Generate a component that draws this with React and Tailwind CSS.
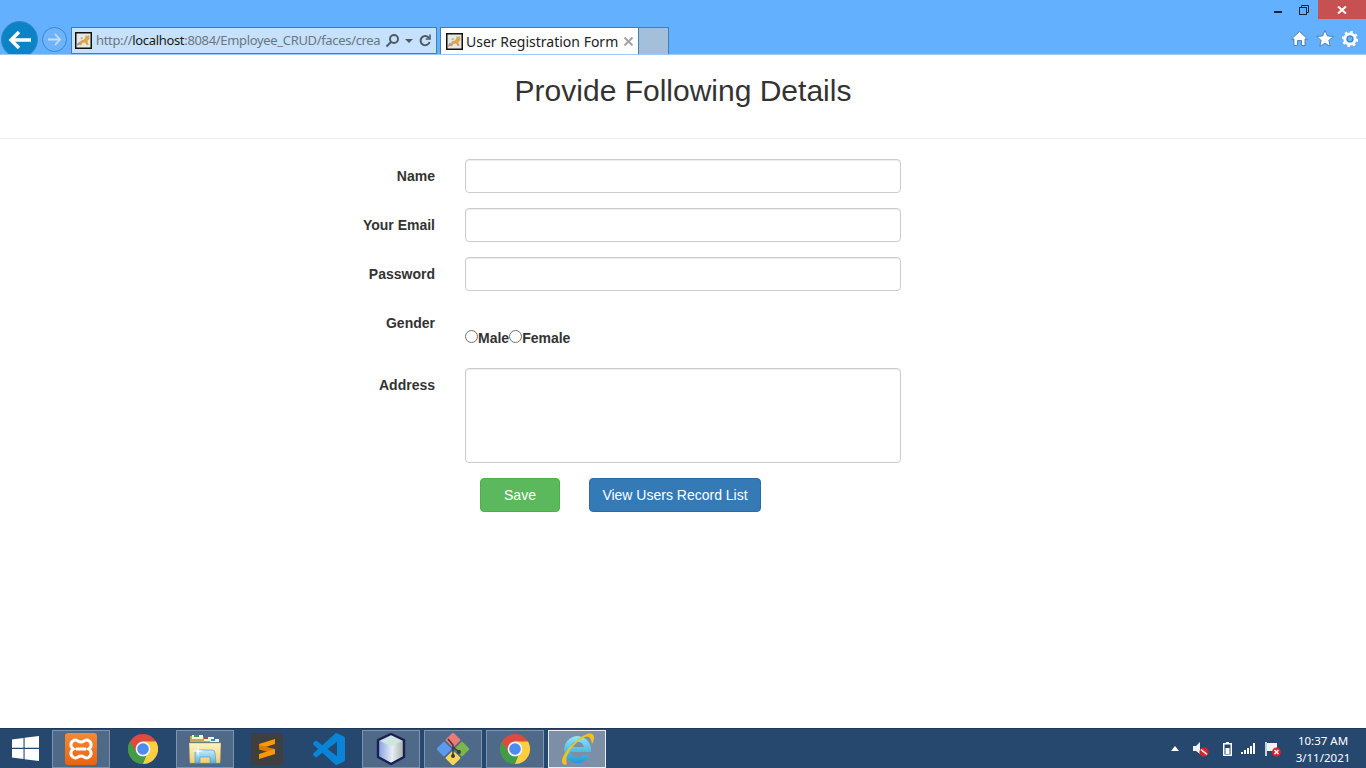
const SEGOE = 'font-["Noto_Sans",sans-serif]'

// favicon tomcat, petit carre noir
function Favicon() {
  return (
    <svg width="17" height="17" viewBox="0 0 17 17" className="shrink-0">
      <rect x="0.75" y="0.75" width="15.5" height="15.5" fill="#e6e8e4" stroke="#111" strokeWidth="1.5" />
      <path d="M3 12 L6 8.5 L9 7.5 L10.5 5 L10.5 3 L12 4 L14 3 L14.5 7 L12.5 9 L13.5 13 L11.5 13 L10 10.5 L7.5 11 L6 13.5 Z" fill="#d9a84e" />
      <path d="M2 14 L6 11.5 L4 10 L2.5 11.5 Z" fill="#9c9a8e" />
      <path d="M5 6 L8 5 L7 7.5 Z" fill="#a8a69a" />
    </svg>
  )
}

function Chrome({ size = 30 }) {
  return (
    <svg width={size} height={size} viewBox="0 0 30 30">
      <circle cx="15" cy="15" r="15" fill="#dd4b3e" />
      <path d="M2 7.5 A15 15 0 0 0 15 30 L21.5 18.8 L15 21 L8.5 18.8 Z" fill="#3f9d47" />
      <path d="M15 30 A15 15 0 0 0 28 7.5 L15 7.5 L21 15 Z" fill="#fccf41" />
      <circle cx="15" cy="15" r="7.4" fill="#f4f4f4" />
      <circle cx="15" cy="15" r="5.8" fill="#4c8bf0" />
    </svg>
  )
}

function Xampp() {
  return (
    <svg width="32" height="32" viewBox="0 0 32 32">
      <defs>
        <linearGradient id="xamppBg" x1="0" x2="0" y1="0" y2="1">
          <stop offset="0" stopColor="#f58a35" />
          <stop offset="1" stopColor="#e8640f" />
        </linearGradient>
      </defs>
      <rect x="0" y="0" width="32" height="32" rx="3" fill="url(#xamppBg)" />
      <g fill="none" stroke="#fff" strokeWidth="3">
        <path d="M13 8 Q10 6 8 8 A4.6 4.6 0 0 0 8.5 16 A4.6 4.6 0 0 0 8 24 Q10 26 13 24 Q16 22 19 24 Q22 26 24 24 A4.6 4.6 0 0 0 23.5 16 A4.6 4.6 0 0 0 24 8 Q22 6 19 8 Q16 10 13 8 Z" />
        <path d="M11 16 H21" />
      </g>
    </svg>
  )
}

function Sublime() {
  return (
    <div className="w-8 h-8 bg-[#3f3f3f] rounded-[2px] flex items-center justify-center">
      <svg width="18" height="22" viewBox="0 0 18 22">
        <path d="M17 1 L1 6 L1 11 L17 6 Z" fill="#ff9800" />
        <path d="M1 7 L17 11 L17 16 L1 11.5 Z" fill="#d97c06" />
        <path d="M17 11 L1 16 L1 21 L17 16 Z" fill="#ff9800" />
      </svg>
    </div>
  )
}

function VsCode() {
  return (
    <svg width="32" height="32" viewBox="0 0 24 24">
      <path
        d="M23.15 2.587L18.21.21a1.494 1.494 0 0 0-1.705.29l-9.46 8.63-4.12-3.128a.999.999 0 0 0-1.276.057L.327 7.261A1 1 0 0 0 .326 8.74L3.899 12 .326 15.26a1 1 0 0 0 .001 1.479L1.65 17.94a.999.999 0 0 0 1.276.057l4.12-3.128 9.46 8.63a1.492 1.492 0 0 0 1.704.29l4.942-2.377A1.5 1.5 0 0 0 24 20.06V3.939a1.5 1.5 0 0 0-.85-1.352zm-5.146 14.861L10.826 12l7.178-5.448v10.896z"
        fill="#0a84d6"
      />
    </svg>
  )
}

function Explorer() {
  return (
    <svg width="32" height="32" viewBox="0 0 32 32">
      <defs>
        <linearGradient id="folderFront" x1="0" x2="0" y1="0" y2="1">
          <stop offset="0" stopColor="#fdf3c4" />
          <stop offset="1" stopColor="#f0cf74" />
        </linearGradient>
        <linearGradient id="folderStand" x1="0" x2="0" y1="0" y2="1">
          <stop offset="0" stopColor="#c4ecf8" />
          <stop offset="1" stopColor="#62b3dc" />
        </linearGradient>
      </defs>
      <path d="M1 3 H14 L15 6 H27 L28 9 H1 Z" fill="#c9a850" />
      <rect x="3" y="2" width="11" height="4" fill="#f7f3e0" />
      <rect x="5" y="2" width="5" height="2" fill="#35a24a" />
      <rect x="15" y="4" width="10" height="4" fill="#f7f3e0" />
      <rect x="15" y="4" width="4" height="2" fill="#c8413a" />
      <rect x="21" y="6" width="9" height="3" fill="#f7f3e0" />
      <rect x="22" y="6" width="4" height="2" fill="#2f8fd8" />
      <path d="M0 10 H32 L31 30 H1 Z" fill="url(#folderFront)" stroke="#c9a850" strokeWidth="0.6" />
      <path d="M6 30 L6 20 Q6 17 9 17 L23 17 Q26 17 26 20 L27 30 L21 30 L21 24 L11 24 L11 30 Z" fill="url(#folderStand)" stroke="#4a96bf" strokeWidth="0.6" />
      <path d="M9 12 L10 17 L15 18 L10 19 L9 24 L8 19 L3 18 L8 17 Z" fill="#ffffff" opacity="0.85" />
    </svg>
  )
}

function Cube() {
  return (
    <svg width="30" height="32" viewBox="0 0 30 32">
      <defs>
        <linearGradient id="cubeFace" x1="0" x2="1" y1="0" y2="0">
          <stop offset="0" stopColor="#7f9fe0" />
          <stop offset="0.55" stopColor="#e8eef4" />
          <stop offset="1" stopColor="#9fb0a8" />
        </linearGradient>
      </defs>
      <path d="M15 1 L28 7 L28 24 L15 31 L2 24 L2 7 Z" fill="url(#cubeFace)" stroke="#1d1f52" strokeWidth="2.4" strokeLinejoin="round" />
      <path d="M15 3 L26 8 L15 13 L4 8 Z" fill="#cfe6df" />
    </svg>
  )
}

function GitGui() {
  return (
    <svg width="32" height="32" viewBox="0 0 32 32">
      <rect x="10.5" y="1.5" width="11" height="11" rx="1" transform="rotate(45 16 7)" fill="#ee7a75" />
      <rect x="1.5" y="10.5" width="11" height="11" rx="1" transform="rotate(45 7 16)" fill="#5b9bef" />
      <rect x="19.5" y="10.5" width="11" height="11" rx="1" transform="rotate(45 25 16)" fill="#7ab648" />
      <rect x="10.5" y="19.5" width="11" height="11" rx="1" transform="rotate(45 16 25)" fill="#f6d659" />
      <path d="M11 6 L16 12 L16 24 M16 14 L22 19" stroke="#3c3c46" strokeWidth="1.6" fill="none" />
      <circle cx="16" cy="23" r="2" fill="#3c3c46" />
      <circle cx="22" cy="19" r="2" fill="#3c3c46" />
    </svg>
  )
}

function IE() {
  return (
    <svg width="36" height="34" viewBox="0 0 36 34">
      <defs>
        <linearGradient id="ieBlue" x1="0" x2="0" y1="0" y2="1">
          <stop offset="0" stopColor="#8fe6f7" />
          <stop offset="1" stopColor="#1f9ad8" />
        </linearGradient>
      </defs>
      <path
        d="M18.5 4 A13.5 13.5 0 1 0 31 23 L23 23 A6.5 6.5 0 0 1 11.5 20 L32 20 A14 14 0 0 0 18.5 4 Z M11.5 15 A7 7 0 0 1 25 15 Z"
        fill="url(#ieBlue)"
        fillRule="evenodd"
      />
      <path d="M4 32 C-1 27 14 8 28 2 C35 0 37 5 33 12 C32 6 30 3 26 5 C16 10 4 24 8 32 C7 33 5 33 4 32 Z" fill="#f2c21f" />
    </svg>
  )
}

const TASK_ITEMS = [
  { icon: <Xampp />, framed: true },
  { icon: <Chrome /> },
  { icon: <Explorer />, framed: true },
  { icon: <Sublime /> },
  { icon: <VsCode /> },
  { icon: <Cube />, framed: true },
  { icon: <GitGui />, framed: true },
  { icon: <Chrome />, framed: true },
  { icon: <IE />, active: true },
]

function TaskButton({ item }) {
  let cls = 'border border-transparent'
  if (item.framed) cls = 'border border-[#7f94aa] bg-[#4f6a88]'
  if (item.active) cls = 'border border-[#e8edf2] bg-[#7c8fa6]'
  return (
    <div className={`w-[58px] h-[38px] flex items-center justify-center overflow-hidden ${cls}`}>
      {item.icon}
    </div>
  )
}

function TitleBar() {
  return (
    <div className="h-[55px] shrink-0 bg-[#63b0ff] border-b border-[#9cc9f5] flex flex-col overflow-hidden">
      <div className="h-[27px] flex justify-end items-start gap-[2px] shrink-0">
        <div className="w-[24px] h-[19px] flex items-center justify-center">
          <div className="w-[8px] h-[2px] bg-[#10243a] mt-[4px]" />
        </div>
        <div className="w-[24px] h-[19px] flex items-center justify-center">
          <svg width="10" height="10" viewBox="0 0 10 10" fill="none" stroke="#10243a">
            <rect x="0.5" y="2.5" width="7" height="7" />
            <path d="M2.5 2.5 V0.5 H9.5 V7.5 H7.5" />
          </svg>
        </div>
        <div className="w-[48px] h-[19px] bg-[#c75050] flex items-center justify-center">
          <svg width="10" height="8" viewBox="0 0 10 8" stroke="#fff" strokeWidth="2">
            <path d="M1 0.5 L9 7.5 M9 0.5 L1 7.5" />
          </svg>
        </div>
      </div>

      <div className="flex-1 flex items-end min-h-0">
        {/* retour / suivant */}
        <div className="w-[37px] h-[27px] ml-[1px] relative shrink-0">
          <div className="absolute left-0 top-[-6px] w-[37px] h-[37px] rounded-full bg-[#0a84c6] border border-[#3a86c0] flex items-center justify-center">
            <svg width="24" height="20" viewBox="0 0 24 20" fill="none" stroke="#fff" strokeWidth="3.4">
              <path d="M11 2 L3 10 L11 18 M3 10 H23" />
            </svg>
          </div>
        </div>
        <div className="ml-[4px] mb-[2px] w-[25px] h-[25px] rounded-full border border-[#3f86c4] bg-[#6db4fc] flex items-center justify-center shrink-0">
          <svg width="15" height="13" viewBox="0 0 15 13" fill="none" stroke="#c6def7" strokeWidth="1.8">
            <path d="M8 1 L13 6.5 L8 12 M13 6.5 H1" />
          </svg>
        </div>

        {/* barre d'adresse */}
        <div className="ml-[4px] w-[366px] h-[27px] bg-[#c5e1fc] border border-[#3d7fb8] flex items-center pl-[3px] shrink-0">
          <Favicon />
          <div className={`ml-[4px] w-[286px] mb-[1px] whitespace-nowrap text-[13px] tracking-[-0.33px] leading-[18px] text-[#6d7680] ${SEGOE}`}>
            http://<span className="text-[#1a1a1a]">localhost</span>:8084/Employee_CRUD/faces/crea
          </div>
          <svg width="15" height="15" viewBox="0 0 15 15" fill="none" stroke="#4d5a66" strokeWidth="2" className="ml-[3px] shrink-0">
            <circle cx="9" cy="6" r="4" />
            <path d="M6 9 L1.5 13.5" />
          </svg>
          <svg width="8" height="4" viewBox="0 0 8 4" className="ml-[5px] shrink-0">
            <path d="M0 0 H8 L4 4 Z" fill="#4d5a66" />
          </svg>
          <svg width="12" height="13" viewBox="0 0 12 13" fill="none" stroke="#4d5a66" strokeWidth="2" className="ml-[6px] shrink-0">
            <path d="M10 4 A4.6 4.6 0 1 0 10.6 8" />
            <path d="M11 0.5 V5 H6.8" strokeWidth="1.6" />
          </svg>
        </div>

        {/* onglets */}
        <div className="ml-[3px] w-[199px] h-[27px] bg-white border border-b-0 border-[#3d7fb8] flex items-center pl-[5px] shrink-0">
          <Favicon />
          <span className={`ml-[3px] mt-[2px] text-[14px] leading-[18px] text-[#222] whitespace-nowrap ${SEGOE}`}>User Registration Form</span>
          <svg width="9" height="9" viewBox="0 0 9 9" stroke="#a3a3a3" strokeWidth="2" className="ml-[6px] shrink-0">
            <path d="M0.5 0.5 L8.5 8.5 M8.5 0.5 L0.5 8.5" />
          </svg>
        </div>
        <div className="w-[30px] h-[27px] bg-[#a3bfd9] border border-l-0 border-b-0 border-[#3d7fb8] shrink-0" />

        {/* accueil, favoris, outils */}
        <div className="ml-auto mr-[8px] mb-[7px] flex items-center gap-[8px]">
          <svg width="17" height="17" viewBox="0 0 17 16">
            <path d="M8.5 1 L16.5 8.5 L14 8.5 L14 15 L10.5 15 L10.5 10 L6.5 10 L6.5 15 L3 15 L3 8.5 L0.5 8.5 Z" fill="#fff" stroke="#3f6f9f" strokeWidth="0.8" />
          </svg>
          <svg width="18" height="17" viewBox="0 0 18 17">
            <path d="M9 0.5 L11.4 6 L17.4 6.5 L12.8 10.4 L14.2 16.3 L9 13.2 L3.8 16.3 L5.2 10.4 L0.6 6.5 L6.6 6 Z" fill="#fff" stroke="#3f6f9f" strokeWidth="0.8" />
          </svg>
          <svg width="16" height="16" viewBox="0 0 16 16">
            <circle cx="8" cy="8" r="5.2" fill="none" stroke="#fff" strokeWidth="2.8" />
            <circle cx="8" cy="8" r="7" fill="none" stroke="#fff" strokeWidth="2.4" strokeDasharray="2.5 3" />
            <circle cx="8" cy="8" r="2.9" fill="none" stroke="#3f6f9f" strokeWidth="0.8" />
          </svg>
        </div>
      </div>
    </div>
  )
}

function Tray() {
  return (
    <div className="ml-auto flex items-center h-full">
      <svg width="8" height="5" viewBox="0 0 8 5" className="mr-[13px]">
        <path d="M0 5 L4 0 L8 5 Z" fill="#fff" />
      </svg>
      <svg width="17" height="16" viewBox="0 0 17 16" className="mr-[14px]">
        <path d="M1 5 H4 L8 1 V13 L4 10 H1 Z" fill="#eef2f6" />
        <circle cx="12" cy="11" r="4.6" fill="#d9232e" />
        <path d="M9 8.5 L15 13.5" stroke="#fff" strokeWidth="1.6" />
      </svg>
      <svg width="9" height="14" viewBox="0 0 9 14" className="mr-[9px]">
        <rect x="0.75" y="1.75" width="7.5" height="11.5" fill="none" stroke="#fff" strokeWidth="1.5" />
        <rect x="3" y="0" width="3" height="1.5" fill="#fff" />
        <rect x="2.5" y="6" width="4" height="6" fill="#fff" />
      </svg>
      <svg width="15" height="11" viewBox="0 0 15 11" className="mr-[9px]">
        <rect x="0" y="9" width="2" height="2" fill="#fff" />
        <rect x="3" y="7" width="2" height="4" fill="#fff" />
        <rect x="6" y="5" width="2" height="6" fill="#fff" />
        <rect x="9" y="3" width="2" height="8" fill="#fff" />
        <rect x="12" y="0" width="2" height="11" fill="#fff" />
      </svg>
      <svg width="17" height="16" viewBox="0 0 17 16" className="mr-[12px]">
        <path d="M1 1 V15" stroke="#fff" strokeWidth="1.5" />
        <path d="M2 2 H12 V10 H2 Z" fill="#eef2f6" />
        <circle cx="11.5" cy="11" r="4.5" fill="#d9232e" />
        <path d="M9.5 9 L13.5 13 M13.5 9 L9.5 13" stroke="#fff" strokeWidth="1.5" />
      </svg>
      <div className={`w-[58px] mr-[14px] pt-[1px] text-center text-[11.5px] leading-[17px] text-white ${SEGOE}`}>
        <div>10:37 AM</div>
        <div>3/11/2021</div>
      </div>
    </div>
  )
}

function TaskBar() {
  return (
    <div className="h-[40px] shrink-0 bg-[#26486f] border-t border-[#1d3a5c] flex items-center">
      <div className="w-[50px] flex justify-center pl-[1px] shrink-0">
        <svg width="27" height="25" viewBox="0 0 27 25" fill="#fff">
          <path d="M0 3.6 L11.5 2 V11.8 H0 Z" />
          <path d="M12.6 1.8 L27 0 V11.8 H12.6 Z" />
          <path d="M0 13 H11.5 V23 L0 21.4 Z" />
          <path d="M12.6 13 H27 V25 L12.6 23.2 Z" />
        </svg>
      </div>
      <div className="ml-[2px] flex gap-[4px]">
        {TASK_ITEMS.map((item, i) => <TaskButton key={i} item={item} />)}
      </div>
      <Tray />
    </div>
  )
}

function Label({ children }) {
  return (
    <label className="pr-[30px] pt-[7px] text-right text-[14px] leading-[20px] font-bold text-[#333]">
      {children}
    </label>
  )
}

const inputCls = 'block w-full h-[34px] bg-white border border-[#ccc] rounded-[4px] shadow-[inset_0_1px_1px_rgba(0,0,0,0.075)]'
const radioCls = 'appearance-none w-[13px] h-[13px] mt-[2px] bg-white border border-[#6f6f6f] rounded-full'

export default function App() {
  return (
    <div className='h-screen flex flex-col overflow-hidden bg-white font-["Liberation_Sans",Arial,sans-serif]'>
      <TitleBar />

      <main className="flex-1 min-h-0">
        <div className="h-[84px] border-b border-[#eee] pt-[15px]">
          <h1 className="text-center text-[30px] leading-[41px] font-normal text-[#333]">Provide Following Details</h1>
        </div>

        <form className="grid grid-cols-[1fr_436px_1fr] mt-[20px]">
          <Label>Name</Label>
          <input className={inputCls} />
          <div />

          <div className="col-span-3 h-[15px]" />
          <Label>Your Email</Label>
          <input className={inputCls} />
          <div />

          <div className="col-span-3 h-[15px]" />
          <Label>Password</Label>
          <input className={inputCls} />
          <div />

          <div className="col-span-3 h-[15px]" />
          <Label>Gender</Label>
          <div className="h-[47px] pt-[22px] flex items-start text-[14px] leading-[20px] font-bold text-[#333]">
            <input type="radio" name="gender" className={radioCls} />
            <span>Male</span>
            <input type="radio" name="gender" className={radioCls} />
            <span>Female</span>
          </div>
          <div />

          <div className="col-span-3 h-[15px]" />
          <Label>Address</Label>
          <textarea className="block w-full h-[95px] bg-white border border-[#ccc] rounded-[4px] shadow-[inset_0_1px_1px_rgba(0,0,0,0.075)] resize-none" />
          <div />

          <div className="col-span-3 h-[15px]" />
          <div />
          <div className="flex pl-[15px] gap-[29px]">
            <button type="button" className="w-[80px] h-[34px] bg-[#5cb85c] border border-[#4cae4c] rounded-[4px] text-[14px] text-white">Save</button>
            <button type="button" className="w-[172px] h-[34px] bg-[#337ab7] border border-[#2e6da4] rounded-[4px] text-[14px] text-white">View Users Record List</button>
          </div>
          <div />
        </form>
      </main>

      <TaskBar />
    </div>
  )
}
